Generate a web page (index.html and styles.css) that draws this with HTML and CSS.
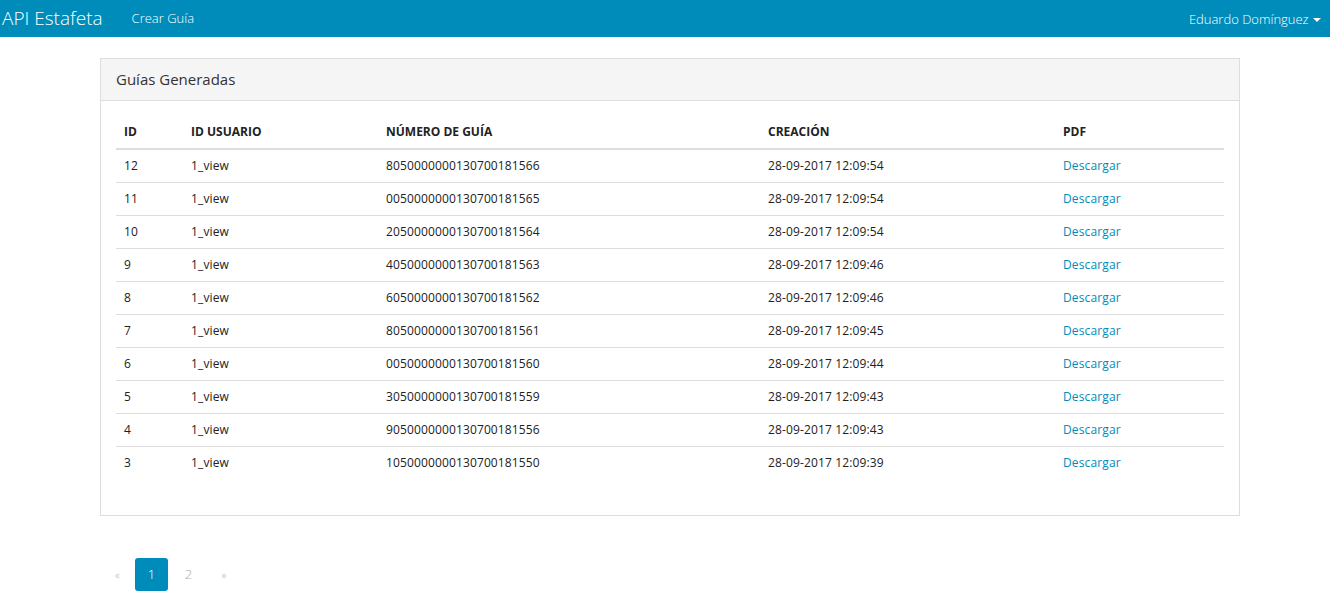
FILE: index.html
```html
<!DOCTYPE html>
<html lang="es">
<head>
<meta charset="utf-8">
<title>API Estafeta</title>
<link rel="stylesheet" href="styles.css">
</head>
<body>
<nav class="navbar">
  <div class="nav-left">
    <a class="brand" href="#">API Estafeta</a>
    <a class="nav-link" href="#">Crear Guía</a>
  </div>
  <div class="nav-right">
    <a class="nav-link user" href="#">Eduardo Domínguez <span class="caret"></span></a>
  </div>
</nav>

<main class="container">
  <section class="panel">
    <div class="panel-heading">Guías Generadas</div>
    <div class="panel-body">
      <table class="table">
        <colgroup>
          <col class="c1"><col class="c2"><col class="c3"><col class="c4"><col class="c5">
        </colgroup>
        <thead>
          <tr><th>ID</th><th>ID USUARIO</th><th>NÚMERO DE GUÍA</th><th>CREACIÓN</th><th>PDF</th></tr>
        </thead>
        <tbody>
          <tr><td>12</td><td>1_view</td><td>8050000000130700181566</td><td>28-09-2017 12:09:54</td><td><a href="#">Descargar</a></td></tr>
          <tr><td>11</td><td>1_view</td><td>0050000000130700181565</td><td>28-09-2017 12:09:54</td><td><a href="#">Descargar</a></td></tr>
          <tr><td>10</td><td>1_view</td><td>2050000000130700181564</td><td>28-09-2017 12:09:54</td><td><a href="#">Descargar</a></td></tr>
          <tr><td>9</td><td>1_view</td><td>4050000000130700181563</td><td>28-09-2017 12:09:46</td><td><a href="#">Descargar</a></td></tr>
          <tr><td>8</td><td>1_view</td><td>6050000000130700181562</td><td>28-09-2017 12:09:46</td><td><a href="#">Descargar</a></td></tr>
          <tr><td>7</td><td>1_view</td><td>8050000000130700181561</td><td>28-09-2017 12:09:45</td><td><a href="#">Descargar</a></td></tr>
          <tr><td>6</td><td>1_view</td><td>0050000000130700181560</td><td>28-09-2017 12:09:44</td><td><a href="#">Descargar</a></td></tr>
          <tr><td>5</td><td>1_view</td><td>3050000000130700181559</td><td>28-09-2017 12:09:43</td><td><a href="#">Descargar</a></td></tr>
          <tr><td>4</td><td>1_view</td><td>9050000000130700181556</td><td>28-09-2017 12:09:43</td><td><a href="#">Descargar</a></td></tr>
          <tr><td>3</td><td>1_view</td><td>1050000000130700181550</td><td>28-09-2017 12:09:39</td><td><a href="#">Descargar</a></td></tr>
        </tbody>
      </table>
    </div>
  </section>

  <ul class="pagination">
    <li class="disabled"><span>«</span></li>
    <li class="active"><span>1</span></li>
    <li><a href="#">2</a></li>
    <li><a href="#">»</a></li>
  </ul>
</main>
</body>
</html>
```

FILE: styles.css
```css
* { box-sizing: border-box; }
html, body { margin: 0; padding: 0; }
body {
  font-family: "Open Sans", "Liberation Sans", sans-serif;
  font-size: 12px;
  color: #222;
  background: #fff;
}
a { text-decoration: none; }

.navbar {
  height: 37px;
  background: #008cba;
  display: flex;
  justify-content: space-between;
  align-items: center;
}
.nav-left { display: flex; align-items: center; }
.brand {
  color: #fff;
  font-weight: 300;
  font-size: 19px;
  padding-left: 2px;
  line-height: 30px;
  margin-top: -2px;
}
.nav-link {
  color: #fff;
  font-weight: 300;
  font-size: 13px;
  line-height: 30px;
  margin-top: -2px;
}
.nav-left .nav-link { margin-left: 29px; }
.nav-right { padding-right: 9px; }
.caret {
  display: inline-block;
  width: 0; height: 0;
  border-top: 4px solid #fff;
  border-left: 4px solid transparent;
  border-right: 4px solid transparent;
  vertical-align: middle;
  margin-left: 1px;
}

.container {
  width: 1140px;
  margin-left: 100px;
  padding-top: 21px;
}
.panel {
  border: 1px solid #ddd;
  background: #fff;
  margin-bottom: 20px;
}
.panel-heading {
  background: #f5f5f5;
  border-bottom: 1px solid #ddd;
  height: 42px;
  padding: 0 15px;
  font-size: 15px;
  line-height: 40px;
  color: #333;
}
.panel-body { padding: 15px 15px 16px; }
.table {
  width: 100%;
  border-collapse: collapse;
  margin-bottom: 20px;
  table-layout: fixed;
}
.c1 { width: 67px; }
.c2 { width: 195px; }
.c3 { width: 382px; }
.c4 { width: 295px; }
.c5 { width: auto; }
.table th, .table td {
  padding: 8px;
  line-height: 16px;
  text-align: left;
  vertical-align: top;
}
.table th {
  font-weight: 700;
  color: #222;
  border-bottom: 2px solid #ddd;
}
.table td {
  border-top: 1px solid #ddd;
  color: #222;
  letter-spacing: 0.13px;
}
.table a { color: #008cba; }

.pagination {
  list-style: none;
  margin: 42px 0 0;
  padding: 0;
  display: flex;
}
.pagination li span, .pagination li a {
  display: block;
  height: 33px;
  line-height: 33px;
  font-size: 13px;
  color: #aaa;
  font-weight: 300;
  text-align: center;
}
.pagination li:nth-child(1) span { width: 35px; font-size: 11px; }
.pagination li.active span {
  width: 33px;
  background: #008cba;
  color: #fff;
  border-radius: 3px;
}
.pagination li:nth-child(3) a { width: 41px; }
.pagination li:nth-child(4) a { width: 30px; font-size: 11px; }
```
